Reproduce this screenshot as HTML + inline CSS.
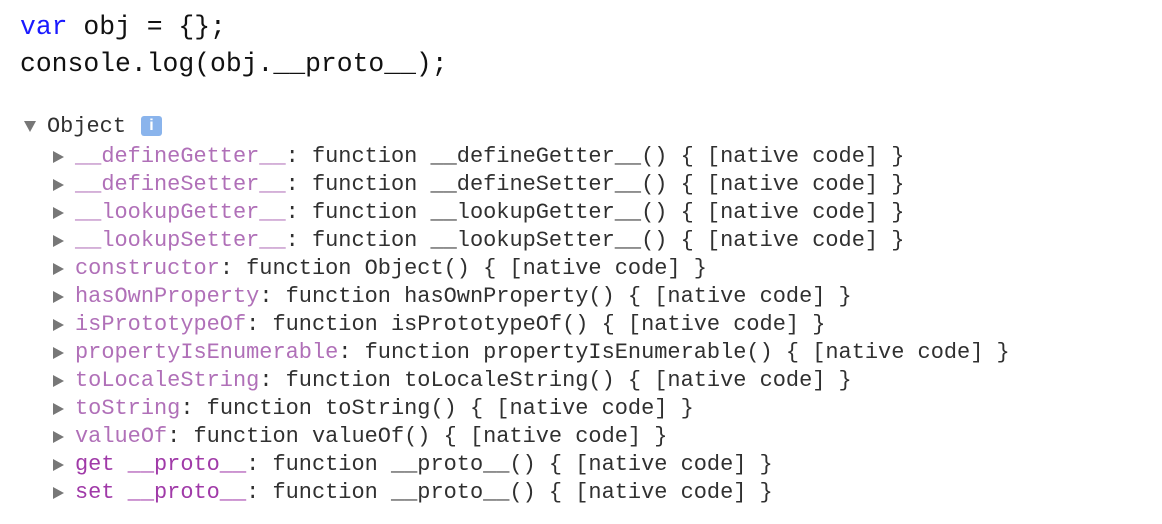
<!DOCTYPE html>
<html><head><style>
body{margin:0;width:1162px;height:524px;background:#fff;overflow:hidden;position:relative}
.code{position:absolute;left:20px;font-family:"Liberation Mono",monospace;font-size:26.4px;color:#111;white-space:pre;line-height:37px}
.r{position:absolute;left:75px;font-family:"Liberation Mono",monospace;font-size:21.95px;color:#303030;white-space:pre;line-height:28px}
.r::before{content:"";position:absolute;left:-22px;top:8px;border-left:11px solid #777;border-top:6px solid transparent;border-bottom:6px solid transparent}
.p{color:#b070b8}.q{color:#a03aa8}
</style></head><body>
<div class="code" style="top:9px"><span style="color:#1a1aff">var</span> obj = {};
console.log(obj.__proto__);</div>
<div style="position:absolute;left:24px;top:121px;border-top:11px solid #777;border-left:6px solid transparent;border-right:6px solid transparent"></div>
<div style="position:absolute;left:47px;top:113px;font-family:'Liberation Mono',monospace;font-size:21.95px;color:#303030;line-height:28px">Object</div>
<div style="position:absolute;left:141px;top:116px;width:21px;height:20px;background:#8ab4ec;border-radius:3px;color:#fff;font:bold 16px 'Liberation Sans',sans-serif;text-align:center;line-height:20px">i</div>
<div class="r" style="top:143px"><span class="p">__defineGetter__</span>: function __defineGetter__() { [native code] }</div>
<div class="r" style="top:171px"><span class="p">__defineSetter__</span>: function __defineSetter__() { [native code] }</div>
<div class="r" style="top:199px"><span class="p">__lookupGetter__</span>: function __lookupGetter__() { [native code] }</div>
<div class="r" style="top:227px"><span class="p">__lookupSetter__</span>: function __lookupSetter__() { [native code] }</div>
<div class="r" style="top:255px"><span class="p">constructor</span>: function Object() { [native code] }</div>
<div class="r" style="top:283px"><span class="p">hasOwnProperty</span>: function hasOwnProperty() { [native code] }</div>
<div class="r" style="top:311px"><span class="p">isPrototypeOf</span>: function isPrototypeOf() { [native code] }</div>
<div class="r" style="top:339px"><span class="p">propertyIsEnumerable</span>: function propertyIsEnumerable() { [native code] }</div>
<div class="r" style="top:367px"><span class="p">toLocaleString</span>: function toLocaleString() { [native code] }</div>
<div class="r" style="top:395px"><span class="p">toString</span>: function toString() { [native code] }</div>
<div class="r" style="top:423px"><span class="p">valueOf</span>: function valueOf() { [native code] }</div>
<div class="r" style="top:451px"><span class="q">get __proto__</span>: function __proto__() { [native code] }</div>
<div class="r" style="top:479px"><span class="q">set __proto__</span>: function __proto__() { [native code] }</div>
</body></html>
